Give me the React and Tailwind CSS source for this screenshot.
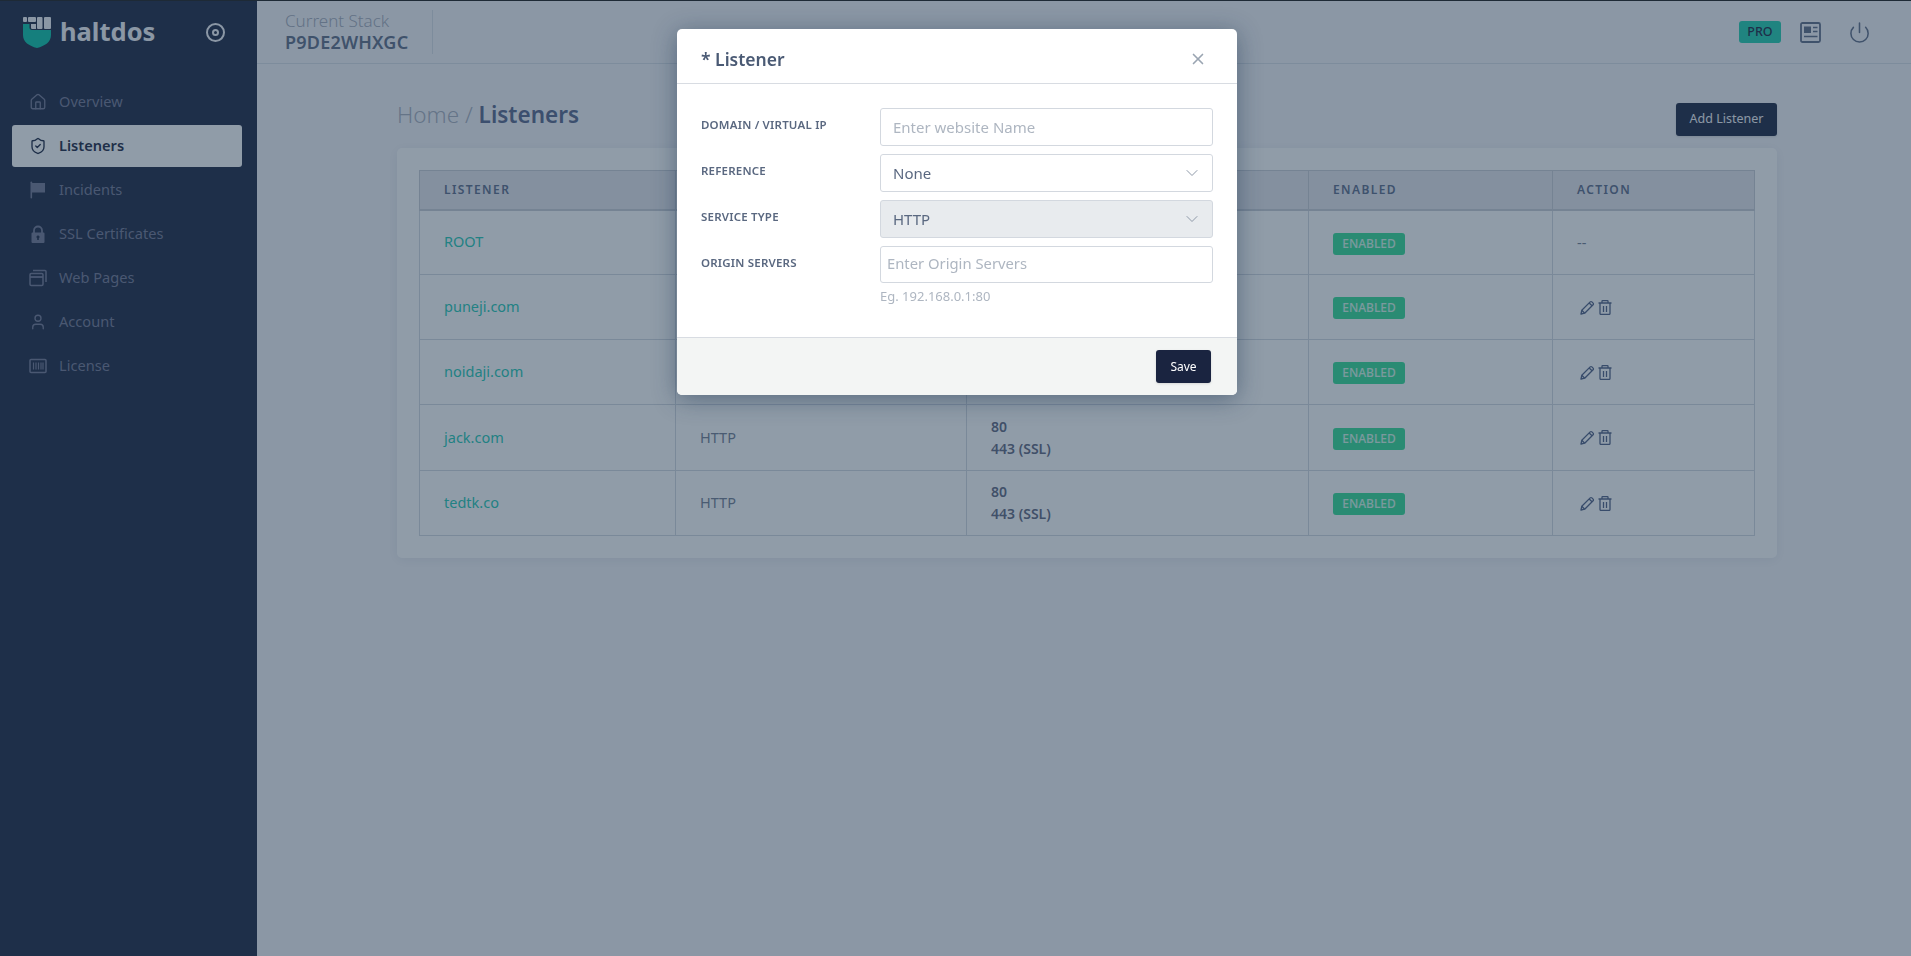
import React from "react";
import { ChevronDown, X, Power, Home, ShieldCheck, User } from "lucide-react";

const Logo = () => (
  <svg width="28" height="31" viewBox="0 0 28 31" className="shrink-0">
    <path d="M0 7h6.500v3.500c0 1.500 1 2.500 2.500 2.500h19v5c0 7-6 11-14 13C6 29 0 25 0 18z" fill="#08c4a8" />
    <path d="M8 7h5v5H9.500C8.500 12 8 11.500 8 10.500z" fill="#f5f5f9" />
    <rect x="0" y="0" width="4" height="5" rx="1" fill="#f5f5f9" />
    <rect x="5" y="0" width="8" height="5" rx="1" fill="#f5f5f9" />
    <rect x="14" y="0" width="5.500" height="12" rx="1" fill="#f5f5f9" />
    <rect x="21" y="0" width="7" height="12" rx="1" fill="#f5f5f9" />
  </svg>
);

const FlagIcon = ({ className }) => (
  <svg viewBox="0 0 18 18" className={className} fill="currentColor">
    <rect x="1.500" y="0.500" width="1.600" height="17" rx="0.800" />
    <path d="M3 2h13v9.500H3z" />
  </svg>
);

const LockIcon = ({ className }) => (
  <svg viewBox="0 0 18 18" className={className} fill="none">
    <path d="M5 8V5.500a4 4 0 0 1 8 0V8" stroke="currentColor" strokeWidth="1.800" />
    <path fillRule="evenodd" fill="currentColor" d="M3.500 7.500h11a1 1 0 0 1 1 1V17a1 1 0 0 1-1 1h-11a1 1 0 0 1-1-1V8.500a1 1 0 0 1 1-1zM9 10.500a1.500 1.500 0 0 0-.8 2.800V15h1.600v-1.700A1.500 1.500 0 0 0 9 10.500z" />
  </svg>
);

const PagesIcon = ({ className }) => (
  <svg viewBox="0 0 18 18" className={className} fill="none" stroke="currentColor" strokeWidth="1.500">
    <rect x="1" y="4.500" width="13" height="12" rx="1.200" />
    <path d="M1 8h13" strokeWidth="1.800" />
    <path d="M4 1.500h12c.6 0 1 .4 1 1V13" />
  </svg>
);

const BarcodeIcon = ({ className }) => (
  <svg viewBox="0 0 18 18" fill="none" stroke="currentColor" strokeWidth="1.500" className={className}>
    <rect x="1" y="2.500" width="16" height="13" rx="1" />
    <path d="M4.500 5.500v7M7 5.500v7M9.500 5.500v7M12 5.500v7M14 5.500v7" strokeWidth="1.200" />
  </svg>
);

const NewsIcon = ({ className }) => (
  <svg viewBox="0 0 21 21" className={className} fill="none" stroke="currentColor">
    <rect x="1" y="1" width="19" height="19" rx="1.500" strokeWidth="1.800" />
    <rect x="4" y="4.500" width="7" height="6.500" fill="currentColor" stroke="none" />
    <path d="M13 5.500h4.500M13 9.500h4.500M4 14.500h13.500" strokeWidth="1.600" />
  </svg>
);

const PencilIcon = ({ className }) => (
  <svg viewBox="0 0 15 15" className={className} fill="none" stroke="currentColor" strokeWidth="1.300" strokeLinejoin="round">
    <path d="M1 14l.8-3.700 8.400-8.400a1.200 1.200 0 0 1 1.700 0l1.200 1.200a1.200 1.200 0 0 1 0 1.700l-8.400 8.400z" />
    <path d="M9.200 3l2.800 2.800M1.800 10.300l2.900 2.900" />
  </svg>
);

const TrashIcon = ({ className }) => (
  <svg viewBox="0 0 14 15" className={className} fill="none" stroke="currentColor" strokeWidth="1.300">
    <path d="M0.500 3h13M4 3V1.200C4 .9 4.200 .7 4.500 .7h5c.3 0 .5 .2 .5 .5V3" />
    <path d="M2 3v10.500c0 .5 .4 .9 .9 .9h8.200c.5 0 .9 -.4 .9 -.9V3" />
    <path d="M5.500 6v6M8.500 6v6" />
  </svg>
);

const NAV = [
  { label: "Overview", icon: Home },
  { label: "Listeners", icon: ShieldCheck, active: true },
  { label: "Incidents", icon: FlagIcon },
  { label: "SSL Certificates", icon: LockIcon },
  { label: "Web Pages", icon: PagesIcon },
  { label: "Account", icon: User },
  { label: "License", icon: BarcodeIcon },
];

const Sidebar = () => (
  <aside className="w-[257px] shrink-0 bg-[#1a2440] min-h-[955px]">
    <div className="flex items-center h-[62px] pl-[23px] pr-[32px]">
      <Logo />
      <span className="ml-[9px] text-[25.5px] font-bold text-[#f5f5f9] leading-none flex-1">haltdos</span>
      <span className="flex items-center justify-center w-[19px] h-[19px] rounded-full border-2 border-[#f5f5f9]">
        <span className="w-[7px] h-[7px] rounded-full border-2 border-[#f5f5f9]" />
      </span>
    </div>
    <nav className="mt-[18px] pl-3 flex flex-col gap-[2px]">
      {NAV.map((item) => (
        <div
          key={item.label}
          className={
            "flex items-center w-[230px] h-[42px] pl-[17px] rounded-[3px] text-[14.6px] " +
            (item.active ? "bg-white text-[#1a2440] font-semibold" : "text-[#737793]")
          }
        >
          <item.icon className="w-[18px] h-[18px]" strokeWidth={1.8} />
          <span className="ml-[12px]">{item.label}</span>
        </div>
      ))}
    </nav>
  </aside>
);

const Header = () => (
  <header className="h-[63px] border-b border-[#d8dee6] flex items-center pl-[28px] pr-[40px]">
    <div className="pr-6 border-r border-[#d8dee6] h-[44px] flex flex-col justify-center">
      <div className="text-[17px] leading-[20px] font-light text-[#a4aaba]">Current Stack</div>
      <div className="text-[18px] leading-[22px] font-semibold text-[#5d6a85] tracking-[0.2px]">P9DE2WHXGC</div>
    </div>
    <div className="ml-auto flex items-center">
      <span className="h-[22px] w-[42px] justify-center flex items-center rounded-[3px] bg-[#1fcfae] text-[#1a2440] text-[12.5px] font-medium">PRO</span>
      <NewsIcon className="ml-[19px] w-[21px] h-[21px] text-[#5d6a85]" />
      <Power className="ml-[27px] w-[23px] h-[23px] text-[#5d6a85]" strokeWidth={1.6} />
    </div>
  </header>
);

const ROWS = [
  { name: "ROOT", action: false, height: "h-[65px]" },
  { name: "puneji.com", action: true, height: "h-[65px]" },
  { name: "noidaji.com", action: true, height: "h-[65px]" },
  { name: "jack.com", action: true, height: "h-[66px]" },
  { name: "tedtk.co", action: true, height: "h-[65px]" },
];

const heads = ["LISTENER", "TYPE", "PORTS", "ENABLED", "ACTION"];

const ListenersTable = () => (
  <table className="w-[1335px] border-collapse table-fixed">
    <colgroup>
      <col className="w-[256px]" />
      <col className="w-[291px]" />
      <col className="w-[342px]" />
      <col className="w-[244px]" />
      <col className="w-[202px]" />
    </colgroup>
    <thead>
      <tr className="h-[39px] bg-[#e7e7ed]">
        {heads.map((h) => (
          <th key={h} className="border border-[#c8ccd5] border-b-2 px-6 text-left text-[12px] font-semibold tracking-[1.4px] text-[#5b6a88]">
            {h}
          </th>
        ))}
      </tr>
    </thead>
    <tbody>
      {ROWS.map((r) => (
        <tr key={r.name} className={r.height}>
          <td className="border border-[#d3d8e0] px-6 text-[14.5px] text-[#22c8b4]">{r.name}</td>
          <td className="border border-[#d3d8e0] px-6 text-[14.5px] text-[#727d92]">HTTP</td>
          <td className="border border-[#d3d8e0] px-6 text-[14px] leading-[22px] font-semibold text-[#5f6680]">
            <div>80</div>
            <div>443 (SSL)</div>
          </td>
          <td className="border border-[#d3d8e0] px-6">
            <span className="inline-flex align-middle items-center justify-center w-[72px] h-[22px] rounded-[3px] bg-[#33dd95] text-white/80 text-[12px] font-medium">ENABLED</span>
          </td>
          <td className="border border-[#d3d8e0] px-6 text-[#4f5f85]">
            {r.action ? (
              <div className="flex items-center gap-[3px] ml-[3px]">
                <PencilIcon className="w-[15px] h-[15px]" />
                <TrashIcon className="w-[14px] h-[15px]" />
              </div>
            ) : (
              <span className="text-[14.5px] text-[#727d92]">--</span>
            )}
          </td>
        </tr>
      ))}
    </tbody>
  </table>
);

const Field = ({ label, children }) => (
  <div className="flex">
    <label className="w-[179px] shrink-0 pt-[8px] text-[11.5px] leading-[18px] font-semibold tracking-[0.2px] text-[#5a6880] uppercase">
      {label}
    </label>
    <div className="flex-1">{children}</div>
  </div>
);

const SelectBox = ({ value, disabled }) => (
  <div className={"h-[38px] border border-[#d3d8df] rounded-[3px] pl-3 pr-[10px] flex items-center justify-between text-[15px] text-[#5a6880] " + (disabled ? "bg-[#e8ebee]" : "bg-white")}>
    {value}
    <ChevronDown className="w-[20px] h-[20px] text-[#8e99a8]" strokeWidth={1.2} />
  </div>
);

const ListenerModal = () => (
  <div className="fixed inset-0 bg-[#213951]/50 flex justify-center items-start pt-[29px] pl-[3px]">
    <div className="w-[560px] bg-white rounded-[5px] shadow-[0_4px_24px_rgba(21,46,77,0.45)] overflow-hidden">
      <div className="h-[55px] border-b border-[#d8dce2] pl-6 pr-[30px] pt-[6px] flex items-center justify-between">
        <h4 className="text-[17.5px] font-semibold text-[#4a5a74]">* Listener</h4>
        <X className="w-[18px] h-[18px] text-[#9aa5b2]" strokeWidth={2.2} />
      </div>
      <div className="h-[253px] px-6 pt-6 flex flex-col gap-2">
        <Field label="Domain / Virtual IP">
          <input readOnly placeholder="Enter website Name" className="w-full h-[38px] border border-[#d3d8df] rounded-[3px] px-3 text-[15px] placeholder:text-[#aeb6c1] outline-none" />
        </Field>
        <Field label="Reference">
          <SelectBox value="None" />
        </Field>
        <Field label="Service Type">
          <SelectBox value="HTTP" disabled />
        </Field>
        <Field label="Origin Servers">
          <input readOnly placeholder="Enter Origin Servers" className="w-full h-[37px] border border-[#d3d8df] rounded-[3px] px-[6px] pb-[3px] text-[14.8px] placeholder:text-[#aeb6c1] outline-none" />
          <p className="mt-[4px] text-[13px] leading-[18px] text-[#aeb6c1]">Eg. 192.168.0.1:80</p>
        </Field>
      </div>
      <div className="h-[58px] border-t border-[#d8dce2] bg-[#f3f5f4] pr-[26px] flex items-center justify-end">
        <button className="w-[55px] h-[33px] rounded-[3px] bg-[#1a2440] text-white text-[12px] shadow-sm">Save</button>
      </div>
    </div>
  </div>
);

export default function App() {
  return (
    <div className="min-h-[956px] border-t border-[#1a1a1a] bg-[#f5f5f9] flex font-['Noto_Sans',sans-serif]">
      <Sidebar />
      <main className="flex-1 min-w-0">
        <Header />
        <div className="pl-[140px] pr-[134px]">
          <div className="flex items-start justify-between h-[84px] pt-[39px]">
            <h2 className="text-[22.5px] leading-[34px] mt-[-5px] font-light text-[#a8aebd]">
              Home / <span className="font-semibold text-[#56648a]">Listeners</span>
            </h2>
            <button className="w-[101px] h-[33px] rounded-[3px] bg-[#1a2440] text-[#f5f5f9] text-[12.5px] shadow-sm">Add Listener</button>
          </div>
          <div className="bg-white rounded-[5px] shadow-[0_2px_12px_rgba(21,46,77,0.08)] p-[22px]">
            <ListenersTable />
          </div>
        </div>
      </main>
      <ListenerModal />
    </div>
  );
}
